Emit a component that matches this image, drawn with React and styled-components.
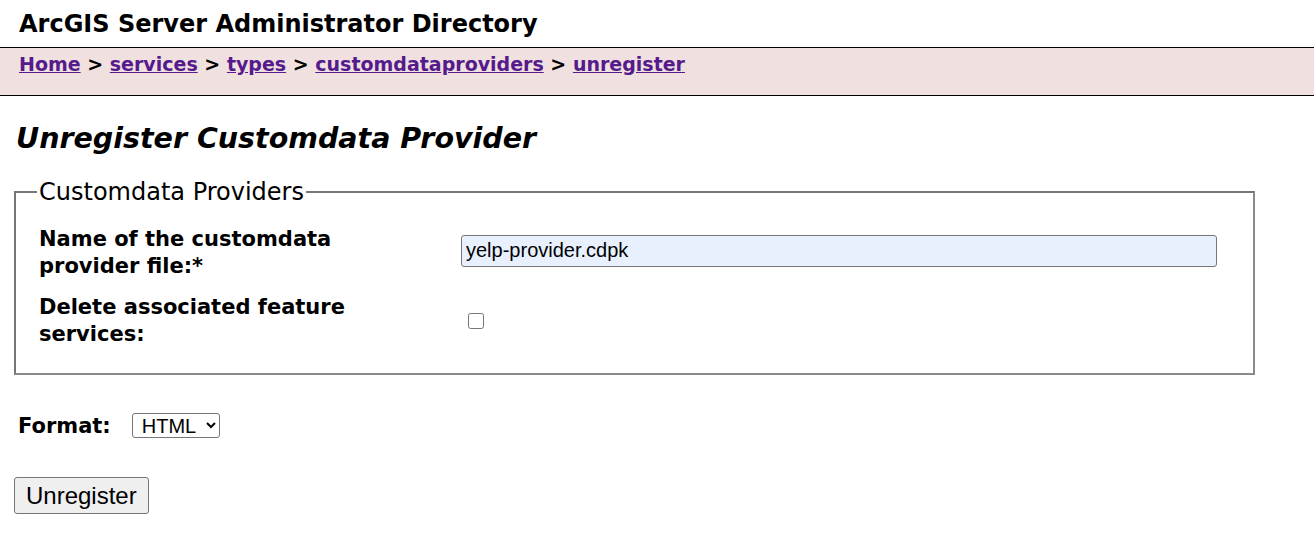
import styled, { createGlobalStyle } from "styled-components";

const GlobalStyle = createGlobalStyle`
  body {
    margin: 0;
    background: #fff;
    font-family: "DejaVu Sans", Verdana, sans-serif;
    color: #000;
  }
`;

const Header = styled.div`
  height: 47px;
  display: flex;
  align-items: center;
  padding-left: 19px;
  border-bottom: 1px solid #000;
`;

const Title = styled.div`
  font-size: 24px;
  font-weight: bold;
`;

const Crumbs = styled.div`
  height: 48px;
  background: #f0e0e0;
  border-bottom: 1px solid #000;
  padding: 5px 0 0 19px;
  box-sizing: border-box;
  font-size: 19px;
  font-weight: bold;
`;

const Crumb = styled.a`
  color: #551a8b;
  text-decoration: underline;
`;

const Main = styled.div`
  padding: 0 14px;
`;

const Heading = styled.h2`
  margin: 26px 0 0 2px;
  font-size: 28.5px;
  font-style: italic;
  font-weight: bold;
`;

const Fieldset = styled.fieldset`
  margin: 23px 0 0;
  width: 1241px;
  box-sizing: border-box;
  border: 2px solid #7a7a7a;
  border-color: #767676 #8a8a8a #8a8a8a #767676;
  padding: 4px 23px 25px;
`;

const Legend = styled.legend`
  font-size: 24px;
  padding: 0 2px;
  margin-left: -2px;
`;

const Row = styled.div`
  display: grid;
  grid-template-columns: 422px 756px;
  align-items: center;
  margin-top: ${(p) => p.$gap}px;
`;

const Label = styled.div`
  font-size: 21px;
  font-weight: bold;
  line-height: 27px;
  width: 330px;
`;

const TextInput = styled.input`
  height: 32px;
  box-sizing: border-box;
  background: #e8f0fe;
  border: 1px solid #767676;
  border-radius: 3px;
  font-family: "Liberation Sans", Arial, sans-serif;
  font-size: 20px;
  padding: 0 4px;
  margin-top: -5px;
`;

const Check = styled.input`
  width: 16px;
  height: 16px;
  margin: 0 0 0 7px;
  accent-color: #767676;
`;

const FormatRow = styled.div`
  display: flex;
  align-items: center;
  gap: 21px;
  margin: 38px 0 0 4px;
`;

const FormatLabel = styled.span`
  font-size: 21px;
  font-weight: bold;
`;

const Select = styled.select`
  font-family: "Liberation Sans", Arial, sans-serif;
  font-size: 20px;
  height: 25px;
  border: 1px solid #767676;
  border-radius: 3px;
  background: #fff;
  padding: 0 6px 0 5px;
`;

const Button = styled.button`
  margin-top: 39px;
  font-family: "Liberation Sans", Arial, sans-serif;
  font-size: 24px;
  height: 37px;
  padding: 0 11px;
  background: #efefef;
  border: 1px solid #767676;
  border-radius: 3px;
  color: #000;
`;

export default function App() {
  const path = ["Home", "services", "types", "customdataproviders", "unregister"];
  return (
    <>
      <GlobalStyle />
      <Header>
        <Title>ArcGIS Server Administrator Directory</Title>
      </Header>
      <Crumbs>
        {path.map((p, i) => (
          <span key={p}>
            {i > 0 && " > "}
            <Crumb href="#">{p}</Crumb>
          </span>
        ))}
      </Crumbs>
      <Main>
        <Heading>Unregister Customdata Provider</Heading>
        <Fieldset>
          <Legend>Customdata Providers</Legend>
          <Row $gap={16}>
            <Label>Name of the customdata provider file:*</Label>
            <TextInput defaultValue="yelp-provider.cdpk" />
          </Row>
          <Row $gap={14}>
            <Label>Delete associated feature services:</Label>
            <Check type="checkbox" />
          </Row>
        </Fieldset>
        <FormatRow>
          <FormatLabel>Format:</FormatLabel>
          <Select defaultValue="html">
            <option value="html">HTML</option>
            <option value="json">JSON</option>
          </Select>
        </FormatRow>
        <Button>Unregister</Button>
      </Main>
    </>
  );
}
